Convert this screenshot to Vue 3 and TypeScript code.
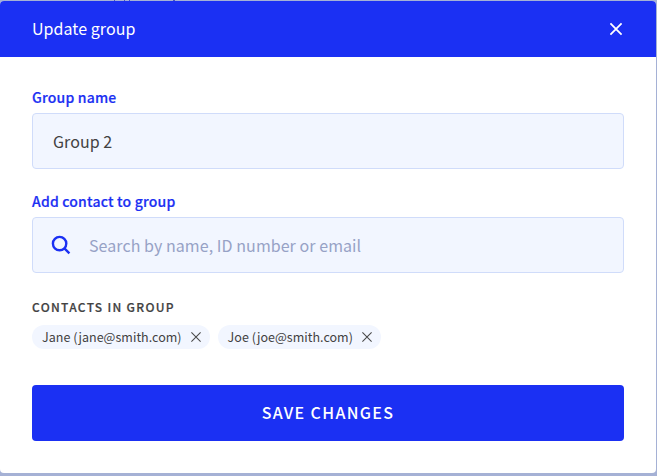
<script setup lang="ts">
import { ref } from 'vue'

interface Contact {
  id: number
  name: string
  email: string
}

const groupName = ref('Group 2')
const search = ref('')
const contacts = ref<Contact[]>([
  { id: 1, name: 'Jane', email: 'jane@smith.com' },
  { id: 2, name: 'Joe', email: 'joe@smith.com' },
])

function removeContact(id: number) {
  contacts.value = contacts.value.filter((c) => c.id !== id)
}
</script>

<template>
  <div class="backdrop">
    <form class="modal" @submit.prevent>
      <header class="header">
        <h1 class="title">Update group</h1>
        <button class="icon-button" type="button" aria-label="Close">
          <svg width="14" height="14" viewBox="0 0 14 14"><path d="M1.4 1.4 12.6 12.6M12.6 1.4 1.4 12.6" stroke="#fff" stroke-width="1.8" fill="none" /></svg>
        </button>
      </header>
      <div class="body">
        <label class="label" for="name">Group name</label>
        <div class="field">
          <input id="name" v-model="groupName" class="input" type="text" />
        </div>
        <label class="label second" for="search">Add contact to group</label>
        <div class="field">
          <svg class="search-icon" width="20" height="20" viewBox="0 0 20 20"><circle cx="8.6" cy="8.6" r="6.7" /><path d="M13.4 13.4 18.4 18.4" /></svg>
          <input id="search" v-model="search" class="input" type="text" placeholder="Search by name, ID number or email" />
        </div>
        <h2 class="subtitle">Contacts in group</h2>
        <ul class="chips">
          <li v-for="c in contacts" :key="c.id" class="chip">
            <span class="chip-text">{{ c.name }} ({{ c.email }})</span>
            <button class="icon-button" type="button" aria-label="Remove" @click="removeContact(c.id)">
              <svg width="10" height="10" viewBox="0 0 10 10"><path d="M.4.4 9.6 9.6M9.6.4.4 9.6" stroke="#4a4a4a" stroke-width="1.05" fill="none" /></svg>
            </button>
          </li>
        </ul>
        <button class="save" type="submit">Save changes</button>
      </div>
    </form>
  </div>
</template>

<style>
body {
  margin: 0;
  overflow: hidden;
}
</style>

<style scoped>
.backdrop {
  box-sizing: border-box;
  height: 476px;
  padding: 1px 1px 3px 0;
  background:
    linear-gradient(90deg, transparent 114px, #4453c4 114px 115px, transparent 115px 124px, #4453c4 124px 125px, transparent 125px 129px, #4453c4 129px 130px, transparent 130px 173px, #4453c4 173px 175px, transparent 175px) 0 0 / 100% 1px no-repeat,
    #a5b1d5;
  font-family: "Noto Sans CJK SC", "Noto Sans", sans-serif;
  color: #424242;
}
.modal {
  height: 472px;
  background: #fff;
  border-radius: 4px;
  overflow: hidden;
}
.header {
  display: flex;
  align-items: center;
  justify-content: space-between;
  box-sizing: border-box;
  height: 56px;
  padding: 0 33px 0 32px;
  background: #1b30f3;
  color: #fff;
}
.title {
  margin: 0;
  padding-bottom: 2px;
  font-size: 16px;
  font-weight: 400;
  line-height: 24px;
  letter-spacing: 0.05px;
}
.icon-button {
  display: flex;
  padding: 0;
  border: 0;
  background: none;
}
.body {
  padding: 28px 32px 0;
}
.label {
  display: block;
  height: 28px;
  font-size: 14px;
  font-weight: 500;
  line-height: 24px;
  letter-spacing: 0.19px;
  -webkit-text-stroke: 0.2px currentColor;
  color: #1b30f3;
}
.label.second {
  margin-top: 20px;
}
.field {
  display: flex;
  align-items: center;
  box-sizing: border-box;
  height: 56px;
  padding: 0 20px;
  border: 1px solid #d0dcfa;
  border-radius: 4px;
  background: #f2f6ff;
}
.input {
  flex: 1;
  height: 54px;
  padding: 0;
  box-sizing: border-box;
  border: 0;
  outline: 0;
  background: none;
  font: 400 16px "Noto Sans CJK SC", "Noto Sans", sans-serif;
  letter-spacing: 0.06px;
  color: #424242;
}
.input::placeholder {
  color: #97a2c6;
  opacity: 1;
}
.search-icon {
  margin: 0 18px 0 -2px;
  fill: none;
  stroke: #1b30f3;
  stroke-width: 2.4;
}
.subtitle {
  margin: 24px 0 0;
  height: 28px;
  font-size: 12px;
  font-weight: 500;
  line-height: 20px;
  letter-spacing: 1.3px;
  -webkit-text-stroke: 0.2px currentColor;
  text-transform: uppercase;
}
.chips {
  display: flex;
  gap: 8px;
  margin: 0;
  padding: 0;
  list-style: none;
}
.chip {
  display: flex;
  align-items: center;
  gap: 9px;
  box-sizing: border-box;
  height: 24px;
  padding: 0 9px 0 10px;
  border-radius: 12px;
  background: #f2f6ff;
}
.chip-text {
  font-size: 12.5px;
  line-height: 24px;
  letter-spacing: 0.018px;
}
.save {
  display: block;
  width: 100%;
  height: 56px;
  margin-top: 36px;
  padding: 0 0 2px;
  border: 0;
  border-radius: 4px;
  background: #1b30f3;
  color: #fff;
  font: 500 16px "Noto Sans CJK SC", "Noto Sans", sans-serif;
  letter-spacing: 1.35px;
  text-transform: uppercase;
}
</style>
